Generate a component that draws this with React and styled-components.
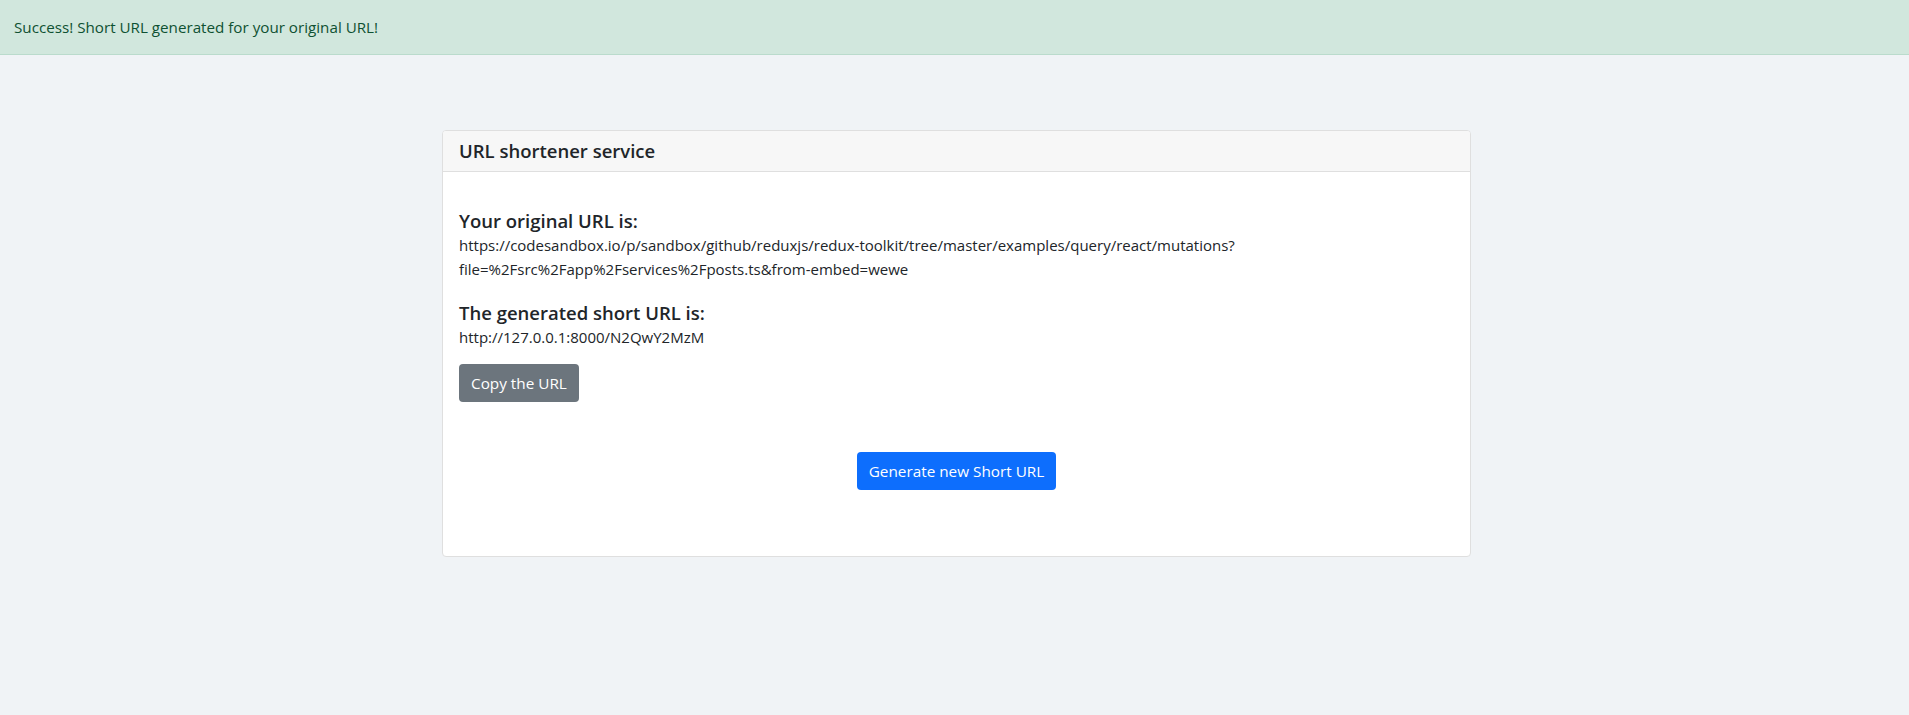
import styled, { createGlobalStyle } from "styled-components";

const GlobalStyle = createGlobalStyle`
  html, body {
    margin: 0;
    padding: 0;
    background: #f0f3f6;
    font-family: "Open Sans", "Noto Sans", sans-serif;
    color: #212529;
  }
`;

const Page = styled.div`
  min-height: 715px;
  background: #f0f3f6;
`;

const Alert = styled.div`
  box-sizing: border-box;
  height: 55px;
  padding: 0 14px;
  display: flex;
  align-items: center;
  background: #d1e7dd;
  color: #0f5132;
  border-bottom: 1px solid #badbcc;
  font-size: 15.2px;
`;

const Main = styled.main`
  display: flex;
  justify-content: center;
  padding: 75px 0 0 4px;
`;

const Card = styled.section`
  box-sizing: border-box;
  width: 1029px;
  background: #fff;
  border: 1px solid #dfdfdf;
  border-radius: 4px;
  overflow: hidden;
`;

const CardHeader = styled.header`
  padding: 8px 16px;
  background: #f7f7f7;
  border-bottom: 1px solid #dfdfdf;
  font-size: 18.5px;
  font-weight: 600;
  line-height: 24px;
`;

const CardBody = styled.div`
  padding: 37px 16px 66px;
  display: flex;
  flex-direction: column;
`;

const Label = styled.h4`
  margin: ${(p) => (p.$first ? "0" : "20px 0 0")};
  font-size: 18.5px;
  font-weight: 600;
  line-height: 24px;
`;

const Value = styled.div`
  font-size: 15px;
  line-height: 24px;
  white-space: nowrap;
`;

const Button = styled.button`
  box-sizing: border-box;
  height: 38px;
  padding: 0 12px;
  border: none;
  border-radius: 4px;
  font-family: inherit;
  font-size: 15.3px;
  color: #fff;
  background: ${(p) => (p.$variant === "primary" ? "#0d6efd" : "#6c757d")};
  cursor: pointer;
`;

const CopyRow = styled.div`
  margin-top: 15px;
`;

const CenterRow = styled.div`
  display: flex;
  justify-content: center;
  margin-top: 50px;
`;

export default function App() {
  return (
    <Page>
      <GlobalStyle />
      <Alert>Success! Short URL generated for your original URL!</Alert>
      <Main>
        <Card>
          <CardHeader>URL shortener service</CardHeader>
          <CardBody>
            <Label $first>Your original URL is:</Label>
            <Value>
              https://codesandbox.io/p/sandbox/github/reduxjs/redux-toolkit/tree/master/examples/query/react/mutations?
              <br />
              file=%2Fsrc%2Fapp%2Fservices%2Fposts.ts&amp;from-embed=wewe
            </Value>
            <Label>The generated short URL is:</Label>
            <Value>http://127.0.0.1:8000/N2QwY2MzM</Value>
            <CopyRow>
              <Button>Copy the URL</Button>
            </CopyRow>
            <CenterRow>
              <Button $variant="primary">Generate new Short URL</Button>
            </CenterRow>
          </CardBody>
        </Card>
      </Main>
    </Page>
  );
}
